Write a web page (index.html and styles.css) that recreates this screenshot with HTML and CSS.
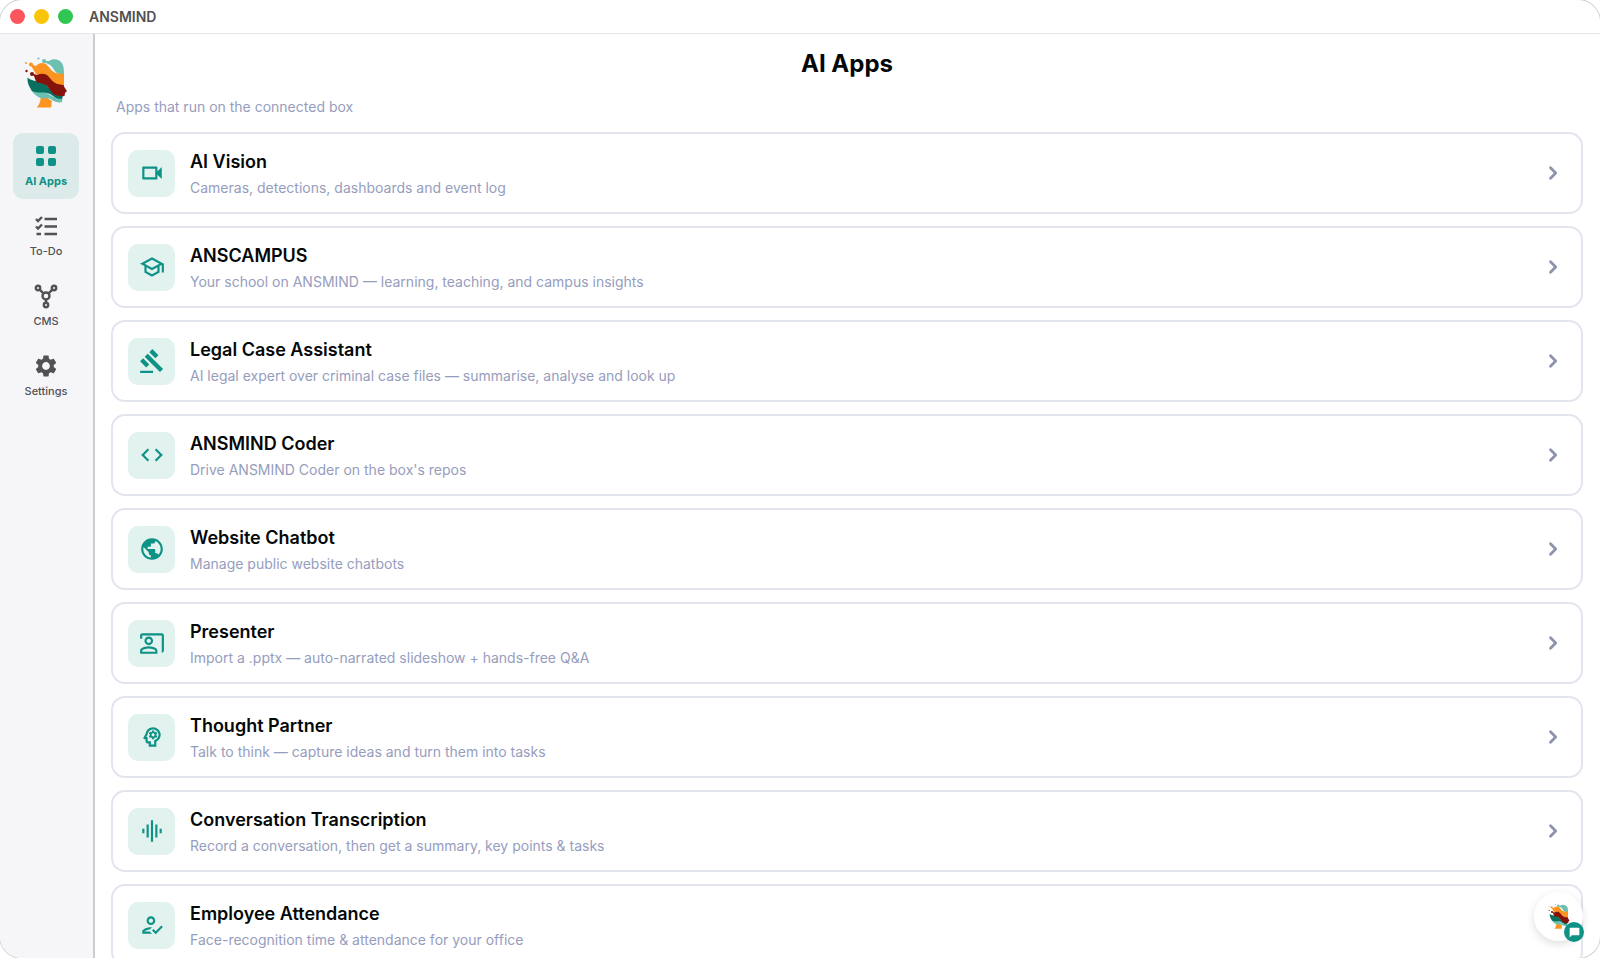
FILE: index.html
```html
<!DOCTYPE html>
<html lang="en">
<head>
<meta charset="utf-8">
<title>ANSMIND</title>
<link rel="stylesheet" href="styles.css">
</head>
<body>
<svg class="defs" aria-hidden="true">
  <symbol id="logo" viewBox="0 0 44 54">
    <path fill="#6dbfb0" d="M19 5l6 0C29 2 36 3 38.500 8c1.500 3 1.500 7 1.500 11-6 0-9-3-11-7-2-3-5-5-10-5z"/>
    <path fill="#fb9420" d="M6 8l6 2c3-4 9-4 12 0 4 6 8 8.500 16 7.500V33h-7L12 18z"/>
    <path fill="#fb9420" d="M17 38l11 7c-1 2 0 4-1 6.500H13c2-3 4-6 4-13.500z"/>
    <path fill="#6dbfb0" d="M7 34c6 1 14 1 19 5 4 3 8 3 12.500 2.500L38 46c-3 1-7 0-10-2-4-3-8-1-12-2-4-2-7-5-9-8z"/>
    <path fill="#08705f" d="M3.500 21.500C8 26 15 24 21 28c5 5 9 10 18 11l-1 4c-5 0-8-2-12-5-6-3-12 0-18-3-3-4-5-9-4.500-13.500z"/>
    <path fill="#85120b" d="M7 17l6 2c4-2 9-2 12 2 5 7 8 7 14.500 8 .5 2 2 4 3.500 6l-2 2-.5 3C34 41 29 39 26 34c-3-5-6-7-12-7-3-2-3-5-4-7z"/>
    <circle cx="14.500" cy="2.500" r="1" fill="#6dbfb0"/><circle cx="20" cy="5" r="2" fill="#6dbfb0"/>
    <circle cx="2" cy="7" r="1" fill="#fb9420"/><circle cx="7" cy="8.500" r="2" fill="#fb9420"/>
    <circle cx="2.500" cy="15" r="1.200" fill="#85120b"/><circle cx="8" cy="18" r="2" fill="#85120b"/>
  </symbol>
  <symbol id="chevron" viewBox="0 0 24 24"><path d="M9.700 7.200l4.800 4.800-4.800 4.800" fill="none" stroke="currentColor" stroke-width="2.600" stroke-linecap="round" stroke-linejoin="round"/></symbol>
</svg>
<div class="window">
  <header class="titlebar">
    <span class="light red"></span><span class="light yellow"></span><span class="light green"></span>
    <span class="app-name">ANSMIND</span>
  </header>
  <div class="body">
    <nav class="sidebar">
      <svg class="logo"><use href="#logo"/></svg>
      <a class="nav-item active" href="#apps">
        <svg viewBox="0 0 26 26"><rect x="3" y="3" width="8" height="8" rx="2"/><rect x="15" y="3" width="8" height="8" rx="2"/><rect x="3" y="15" width="8" height="8" rx="2"/><rect x="15" y="15" width="8" height="8" rx="2"/></svg>
        <span>AI Apps</span>
      </a>
      <a class="nav-item" href="#todo">
        <svg viewBox="0 0 26 26" class="line"><path d="M3 6l2 2 4-4M3 13.500l2 2 4-4M3.500 21H8M11.500 6H24M11.500 13.500H24M11.500 21H24"/></svg>
        <span>To-Do</span>
      </a>
      <a class="nav-item" href="#cms">
        <svg viewBox="0 0 26 26" class="line"><circle cx="13" cy="13" r="3.500"/><circle cx="5" cy="5" r="2.200"/><circle cx="21" cy="5" r="2.200"/><circle cx="13" cy="22" r="2.200"/><path d="M6.700 6.700l3.700 3.700M19.300 6.700l-3.700 3.700M13 16.500v3"/></svg>
        <span>CMS</span>
      </a>
      <a class="nav-item" href="#settings">
        <svg viewBox="0 0 24 24"><path d="M19.140 12.940c.04-.3.06-.61.06-.94 0-.32-.02-.64-.07-.94l2.030-1.580c.18-.14.23-.41.12-.61l-1.920-3.320c-.12-.22-.37-.29-.59-.22l-2.390.96c-.5-.38-1.030-.7-1.620-.94l-.36-2.540c-.04-.24-.24-.41-.48-.41h-3.840c-.24 0-.43.17-.47.41l-.36 2.540c-.59.24-1.130.57-1.620.94l-2.390-.96c-.22-.08-.47 0-.59.22L2.740 8.870c-.12.21-.08.47.12.61l2.030 1.580c-.05.3-.09.63-.09.94s.02.64.07.94l-2.030 1.580c-.18.14-.23.41-.12.61l1.920 3.320c.12.22.37.29.59.22l2.390-.96c.5.38 1.030.7 1.620.94l.36 2.540c.05.24.24.41.48.41h3.840c.24 0 .44-.17.47-.41l.36-2.540c.59-.24 1.130-.56 1.620-.94l2.390.96c.22.08.47 0 .59-.22l1.920-3.320c.12-.22.07-.47-.12-.61l-2.010-1.580zM12 15.600c-1.980 0-3.600-1.620-3.600-3.600s1.620-3.600 3.600-3.600 3.600 1.620 3.600 3.600-1.620 3.600-3.600 3.600z"/></svg>
        <span>Settings</span>
      </a>
    </nav>
    <main class="main">
      <h1>AI Apps</h1>
      <p class="intro">Apps that run on the connected box</p>
      <div class="cards">
        <a class="card" href="#vision">
          <span class="tile"><svg viewBox="0 0 24 24"><path d="M15 8v8H5V8h10m1-2H4c-.55 0-1 .45-1 1v10c0 .55.45 1 1 1h12c.55 0 1-.45 1-1v-3.500l4 4v-11l-4 4V7c0-.55-.45-1-1-1z"/></svg></span>
          <span class="text"><strong>AI Vision</strong><span>Cameras, detections, dashboards and event log</span></span>
          <svg class="chevron"><use href="#chevron"/></svg>
        </a>
        <a class="card" href="#campus">
          <span class="tile"><svg viewBox="0 0 24 24"><path d="M12 3L1 9l4 2.180v6L12 21l7-3.820v-6l2-1.090V17h2V9L12 3zm6.820 6L12 12.720 5.180 9 12 5.280 18.820 9zM17 15.990l-5 2.730-5-2.730v-3.720L12 15l5-2.730v3.720z"/></svg></span>
          <span class="text"><strong>ANSCAMPUS</strong><span>Your school on ANSMIND — learning, teaching, and campus insights</span></span>
          <svg class="chevron"><use href="#chevron"/></svg>
        </a>
        <a class="card" href="#legal">
          <span class="tile"><svg viewBox="0 0 24 24"><path d="M1 21h12v2H1zM5.245 8.070l2.830-2.827 14.140 14.142-2.828 2.828zM12.317 1l5.657 5.656-2.830 2.830-5.654-5.660zM3.825 9.485l5.657 5.657-2.828 2.828-5.657-5.657z"/></svg></span>
          <span class="text"><strong>Legal Case Assistant</strong><span>AI legal expert over criminal case files — summarise, analyse and look up</span></span>
          <svg class="chevron"><use href="#chevron"/></svg>
        </a>
        <a class="card" href="#coder">
          <span class="tile"><svg viewBox="0 0 24 24"><path d="M9.400 16.600L4.800 12l4.600-4.600L8 6l-6 6 6 6 1.400-1.400zm5.200 0l4.600-4.600-4.600-4.600L16 6l6 6-6 6-1.400-1.400z"/></svg></span>
          <span class="text"><strong>ANSMIND Coder</strong><span>Drive ANSMIND Coder on the box's repos</span></span>
          <svg class="chevron"><use href="#chevron"/></svg>
        </a>
        <a class="card" href="#chatbot">
          <span class="tile"><svg viewBox="0 0 24 24"><path d="M12 2C6.480 2 2 6.480 2 12s4.480 10 10 10 10-4.480 10-10S17.520 2 12 2zm-1 17.930c-3.950-.49-7-3.850-7-7.930 0-.62.08-1.210.21-1.790L9 15v1c0 1.100.9 2 2 2v1.930zm6.900-2.540c-.26-.81-1-1.390-1.900-1.390h-1v-3c0-.55-.45-1-1-1H8v-2h2c.55 0 1-.45 1-1V7h2c1.100 0 2-.9 2-2v-.41c2.930 1.190 5 4.060 5 7.410 0 2.080-.8 3.970-2.100 5.390z"/></svg></span>
          <span class="text"><strong>Website Chatbot</strong><span>Manage public website chatbots</span></span>
          <svg class="chevron"><use href="#chevron"/></svg>
        </a>
        <a class="card" href="#presenter">
          <span class="tile"><svg viewBox="0 0 24 24"><path d="M21 3H3c-1.100 0-2 .9-2 2v3h2V5h18v16c1.100 0 2-.9 2-2V5c0-1.100-.9-2-2-2zM9 14c2.210 0 4-1.790 4-4s-1.790-4-4-4-4 1.790-4 4 1.790 4 4 4zm0-6c1.100 0 2 .9 2 2s-.9 2-2 2-2-.9-2-2 .9-2 2-2zM15.390 16.560C13.710 15.700 11.530 15 9 15s-4.710.7-6.390 1.560C1.610 17.070 1 18.100 1 19.220V22h16v-2.780c0-1.120-.61-2.150-1.610-2.660zM15 20H3v-.78c0-.38.2-.72.52-.88C4.710 17.730 6.630 17 9 17c2.370 0 4.290.73 5.480 1.340.32.16.52.5.52.88V20z"/></svg></span>
          <span class="text"><strong>Presenter</strong><span>Import a .pptx — auto-narrated slideshow + hands-free Q&amp;A</span></span>
          <svg class="chevron"><use href="#chevron"/></svg>
        </a>
        <a class="card" href="#thought">
          <span class="tile"><svg viewBox="0 0 24 24"><path d="M15.820 7.220l-1 .4c-.21-.16-.43-.29-.67-.39L14 6.170c-.02-.1-.1-.17-.2-.17h-1.600c-.1 0-.18.07-.19.17l-.15 1.060c-.24.1-.47.23-.67.39l-1-.4c-.09-.03-.2 0-.24.09l-.8 1.380c-.05.09-.03.2.05.26l.85.66c-.03.12-.05.26-.05.39s.01.26.03.39l-.84.66c-.08.06-.1.17-.05.25l.8 1.390c.05.09.15.12.25.09l.99-.4c.21.16.43.29.68.39l.14 1.060c.02.1.1.17.2.17h1.600c.1 0 .18-.07.2-.17l.15-1.060c.24-.1.47-.23.67-.39l.99.4c.09.04.2 0 .24-.09l.8-1.390c.05-.09.03-.19-.05-.25l-.83-.66c.02-.13.03-.26.03-.39s-.01-.27-.03-.39l.85-.66c.08-.06.1-.17.05-.26l-.8-1.380c-.05-.09-.15-.12-.25-.09zM13 11.430c-.79 0-1.430-.64-1.430-1.430S12.210 8.570 13 8.570s1.430.64 1.430 1.430-.64 1.430-1.430 1.430z"/><path d="M19.940 9.060C19.500 5.730 16.570 3 13 3 9.470 3 6.570 5.610 6.080 9l-1.930 3.480c-.41.66.07 1.520.85 1.520h1v2c0 1.100.9 2 2 2h1v3h7v-4.680c2.620-1.250 4.350-4.080 3.940-7.260zm-5.050 5.570L14 15.050V19h-3v-3H8v-4H6.700l1.330-2.330C8.210 7.060 10.350 5 13 5c2.760 0 5 2.240 5 5 0 2.090-1.290 3.880-3.110 4.630z"/></svg></span>
          <span class="text"><strong>Thought Partner</strong><span>Talk to think — capture ideas and turn them into tasks</span></span>
          <svg class="chevron"><use href="#chevron"/></svg>
        </a>
        <a class="card" href="#transcription">
          <span class="tile"><svg viewBox="0 0 24 24"><path d="M7 18h2V6H7v12zm4 4h2V2h-2v20zm-8-8h2v-4H3v4zm12 4h2V6h-2v12zm4-8v4h2v-4h-2z"/></svg></span>
          <span class="text"><strong>Conversation Transcription</strong><span>Record a conversation, then get a summary, key points &amp; tasks</span></span>
          <svg class="chevron"><use href="#chevron"/></svg>
        </a>
        <a class="card" href="#attendance">
          <span class="tile"><svg viewBox="0 0 24 24"><path d="M11 12c2.210 0 4-1.790 4-4s-1.790-4-4-4-4 1.790-4 4 1.790 4 4 4zm0-6c1.100 0 2 .9 2 2s-.9 2-2 2-2-.9-2-2 .9-2 2-2zM5 18c.2-.63 2.570-1.680 4.960-1.940l2.040-2c-.39-.04-.68-.06-1-.06-2.670 0-8 1.340-8 4v2h9l-2-2H5zM20.600 12.500l-5.130 5.170-2.070-2.080L12 17l3.470 3.500L22 13.910z"/></svg></span>
          <span class="text"><strong>Employee Attendance</strong><span>Face-recognition time &amp; attendance for your office</span></span>
        </a>
      </div>
    </main>
  </div>
  <button class="assistant" type="button" aria-label="Open assistant">
    <svg class="assistant-logo"><use href="#logo"/></svg>
    <span class="badge"><svg viewBox="0 0 24 24"><path d="M4 3h16a1 1 0 0 1 1 1v12a1 1 0 0 1-1 1H7l-4 4V4a1 1 0 0 1 1-1z"/></svg></span>
  </button>
</div>
</body>
</html>
```
FILE: styles.css
```css
* { box-sizing: border-box; }
body {
  margin: 0;
  background: #fff;
  font-family: Inter, "Liberation Sans", sans-serif;
  color: #050808;
}
a { color: inherit; text-decoration: none; }
svg { display: block; fill: currentColor; flex: none; }
.defs { position: absolute; width: 0; height: 0; }
.window {
  position: relative;
  height: 100vh;
  display: flex;
  flex-direction: column;
  overflow: hidden;
  border-radius: 22px;
  box-shadow: 0 0 0 1px #d4d4d6;
  background: #fff;
}
.titlebar {
  flex: none;
  display: flex;
  align-items: center;
  gap: 9px;
  height: 34px;
  padding: 0 10px;
  border-bottom: 1px solid #e6e6e8;
}
.light { width: 15px; height: 15px; border-radius: 50%; }
.red { background: #fc565d; }
.yellow { background: #f9c50b; }
.green { background: #31c553; }
.app-name { margin-left: 7px; font-size: 14px; font-weight: 600; color: #505050; }
.body { flex: 1; min-height: 0; display: flex; }
.sidebar {
  flex: none;
  width: 95px;
  padding: 22px 14px 0 13px;
  display: flex;
  flex-direction: column;
  gap: 4px;
  background: #f6f6f9;
  border-right: 2px solid #cbccd0;
}
.logo { width: 44px; height: 54px; margin: 0 auto 19px; }
.nav-item {
  height: 66px;
  display: flex;
  flex-direction: column;
  align-items: center;
  justify-content: center;
  gap: 4px;
  border-radius: 10px;
  font-size: 11px;
  line-height: 16px;
  font-weight: 500;
  color: #505255;
}
.nav-item svg { width: 26px; height: 26px; }
.nav-item .line { fill: none; stroke: currentColor; stroke-width: 2.4; }
.nav-item.active { background: #dceaea; color: #0d9285; font-weight: 700; }
.main { flex: 1; min-width: 0; padding: 14px 17px 0 16px; overflow: hidden; }
h1 { margin: 0; font-size: 24px; line-height: 32px; font-weight: 700; text-align: center; }
.intro { margin: 17px 0 15px 5px; font-size: 14px; line-height: 20px; color: #969dbd; }
.cards { display: flex; flex-direction: column; gap: 12px; }
.card {
  display: flex;
  align-items: center;
  gap: 15px;
  height: 82px;
  padding: 0 15px;
  border: 2px solid #e3e5ee;
  border-radius: 14px;
}
.tile {
  display: grid;
  place-items: center;
  width: 47px;
  height: 47px;
  border-radius: 10px;
  background: #e1f2ef;
  color: #0d9285;
}
.tile svg { width: 26px; height: 26px; }
.text {
  flex: 1;
  display: flex;
  flex-direction: column;
  gap: 4px;
  padding-top: 2px;
  font-size: 14px;
  line-height: 20px;
  color: #969dbd;
}
.text strong { font-size: 18px; line-height: 24px; font-weight: 600; color: #050808; }
.chevron { width: 26px; height: 26px; color: #8d93ad; }
.assistant {
  position: absolute;
  right: 17px;
  bottom: 17px;
  width: 49px;
  height: 49px;
  padding: 0;
  display: grid;
  place-items: center;
  border: 0;
  border-radius: 50%;
  background: #fff;
  box-shadow: 0 3px 8px #0002;
}
.assistant-logo { width: 22px; height: 27px; }
.badge {
  position: absolute;
  right: -1px;
  bottom: -1px;
  display: grid;
  place-items: center;
  width: 20px;
  height: 20px;
  border-radius: 50%;
  background: #0d9285;
  color: #fff;
}
.badge svg { width: 13px; height: 13px; }
```
